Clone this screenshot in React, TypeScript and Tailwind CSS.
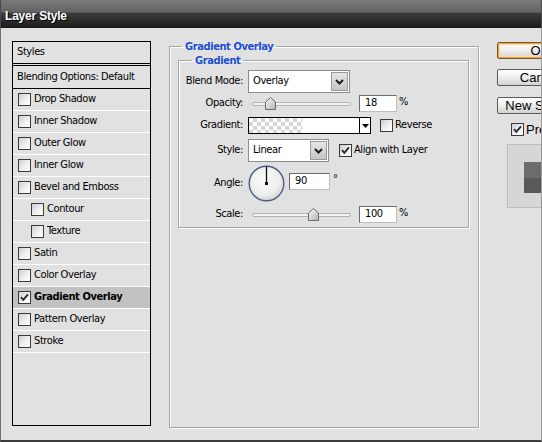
import React from "react";

const F = "font-['DejaVu_Sans_Condensed','DejaVu_Sans',sans-serif] tracking-[-0.4px]";

function Check({ checked = false }: { checked?: boolean }) {
  return (
    <span className="relative inline-flex items-center justify-center w-[13px] h-[13px] shrink-0 border border-[#3a3a3a] bg-[linear-gradient(135deg,#cfcfcf_0%,#f2f2f2_60%,#ffffff_100%)]">
      {checked && (
        <svg width="11" height="11" viewBox="0 0 11 11" className="absolute left-0 top-0">
          <polyline points="2,5.2 4.3,7.8 9,2.4" fill="none" stroke="#2a2a2a" strokeWidth="1.9" />
        </svg>
      )}
    </span>
  );
}

function Chevron() {
  return (
    <svg width="9" height="6" viewBox="0 0 9 6">
      <polyline points="1,1 4.5,4.5 8,1" fill="none" stroke="#1e1e1e" strokeWidth="2" />
    </svg>
  );
}

function Select({ value, w }: { value: string; w: string }) {
  return (
    <div className={`flex h-[23px] border border-[#8c8c8c] bg-white ${w}`}>
      <div className="flex-1 flex items-center pl-[4px] text-[11px] text-black">{value}</div>
      <div className="w-[17px] m-[1px] flex items-center justify-center border border-[#9a9a9a] bg-[linear-gradient(#e6e6e6,#c6c6c6)]">
        <Chevron />
      </div>
    </div>
  );
}

function Thumb() {
  return (
    <svg width="11" height="13" viewBox="0 0 11 13">
      <defs>
        <linearGradient id="tg" x1="0" x2="1" y1="0" y2="1">
          <stop offset="0" stopColor="#fafafa" />
          <stop offset="1" stopColor="#b5b5b5" />
        </linearGradient>
      </defs>
      <path d="M0.5 12.5 V5 L5.5 0.5 L10.5 5 V12.5 Z" fill="url(#tg)" stroke="#6a6a6a" />
    </svg>
  );
}

function Slider({ pos }: { pos: "a" | "b" }) {
  return (
    <div className="relative w-[106px] h-[17px] flex items-center">
      <div className="ml-[4px] w-[99px] h-[4px] rounded-[2px] border border-[#b2b2b2] bg-[#f5f5ee]" />
      {pos === "a" ? (
        <div className="absolute left-[17px] top-[2px]">
          <Thumb />
        </div>
      ) : (
        <div className="absolute left-[60px] top-[2px]">
          <Thumb />
        </div>
      )}
    </div>
  );
}

function Input({ value, w }: { value: string; w: string }) {
  return (
    <div className={`h-[17px] border border-[#6a6a6a] border-r-[#bdbdbd] border-b-[#bdbdbd] bg-white flex items-center pl-[5px] text-[11px] text-black ${w}`}>
      {value}
    </div>
  );
}

function Dial() {
  return (
    <svg width="37" height="37" viewBox="0 0 37 37">
      <defs>
        <radialGradient id="dg" cx="0.45" cy="0.4" r="0.6">
          <stop offset="0" stopColor="#fbfbfb" />
          <stop offset="0.7" stopColor="#eeeeee" />
          <stop offset="1" stopColor="#d6d6d6" />
        </radialGradient>
      </defs>
      <circle cx="18.5" cy="18.5" r="17.3" fill="url(#dg)" stroke="#4c5c88" strokeWidth="1.4" />
      <line x1="18.5" y1="18.5" x2="18.5" y2="1.5" stroke="#111" strokeWidth="1.3" />
      <rect x="17" y="17" width="3" height="3" fill="#111" />
    </svg>
  );
}

function Label({ children }: { children: React.ReactNode }) {
  return <div className="w-[64px] text-right text-[11px] text-black shrink-0">{children}</div>;
}

const items: { label: string; indent?: boolean; checked?: boolean }[] = [
  { label: "Drop Shadow" },
  { label: "Inner Shadow" },
  { label: "Outer Glow" },
  { label: "Inner Glow" },
  { label: "Bevel and Emboss" },
  { label: "Contour", indent: true },
  { label: "Texture", indent: true },
  { label: "Satin" },
  { label: "Color Overlay" },
  { label: "Gradient Overlay", checked: true },
  { label: "Pattern Overlay" },
  { label: "Stroke" },
];

function Button({ children, primary = false }: { children: React.ReactNode; primary?: boolean }) {
  return (
    <div
      className={`w-[86px] h-[17px] rounded-[2px] border flex items-center justify-center text-[13px] leading-none tracking-normal text-black font-['Liberation_Sans',Arial,sans-serif] bg-[linear-gradient(#ffffff_0%,#f0f0f0_45%,#d2d2d2_100%)] ${
        primary ? "border-[#6b5a3a] shadow-[inset_0_0_0_1px_#f2a43a,inset_0_0_0_2px_#ffd79a]" : "border-[#5a5a5a]"
      }`}
    >
      {children}
    </div>
  );
}

export default function App() {
  return (
    <div className={`w-[542px] h-[442px] overflow-hidden flex flex-col bg-[#e1e1e1] ${F}`}>
      {/* Title bar */}
      <div className="h-[28px] shrink-0 flex items-center pl-[4px] bg-[linear-gradient(#7a7a7a_0%,#626262_44%,#3c3c3c_46%,#1c1c1c_100%)] border-x border-[#4a4a4a]">
        <span className="text-white font-bold text-[12px] tracking-[-0.2px] font-['Liberation_Sans',Arial,sans-serif] [text-shadow:1px_1px_0_#000] pt-[3px]">
          Layer Style
        </span>
      </div>

      {/* Body */}
      <div className="flex-1 flex items-start border-l border-[#6f6f6f] border-r border-r-[#9a9a9a] border-b-2 border-b-[#3c3c3c] overflow-hidden">
        {/* Styles list */}
        <div className="ml-[11px] mt-[13px] w-[139px] h-[385px] shrink-0 border border-black flex flex-col text-[11px] text-black">
          <div className="h-[22px] shrink-0 flex items-center pl-[4px] border-b border-black">Styles</div>
          <div className="h-[2px] shrink-0 border-b border-black" />
          <div className="h-[23px] shrink-0 flex items-center pl-[4px] border-b border-black">Blending Options: Default</div>
          {items.map((it) => (
            <div
              key={it.label}
              className={`h-[22px] shrink-0 flex items-center gap-[3px] border-b border-white ${
                it.indent ? "pl-[18px]" : "pl-[5px]"
              } ${it.checked ? "bg-[#c2c2c2] font-bold" : ""}`}
            >
              <Check checked={!!it.checked} />
              <span>{it.label}</span>
            </div>
          ))}
        </div>

        {/* Gradient Overlay group */}
        <fieldset className="ml-[18px] mt-[12px] w-[310px] h-[388px] shrink-0 p-0 border border-[#a6a6a6] shadow-[1px_1px_0_#fff,inset_1px_1px_0_#fff]">
          <legend className="ml-[12px] px-[3px] text-[11px] leading-[13px] font-bold text-[#1a4ed0]">Gradient Overlay</legend>
          <fieldset className="ml-[8px] mt-[1px] w-[291px] h-[174px] p-0 border border-[#a6a6a6] shadow-[1px_1px_0_#fff,inset_1px_1px_0_#fff]">
            <legend className="ml-[13px] px-[3px] text-[11px] leading-[13px] font-bold text-[#1a4ed0]">Gradient</legend>
            <div className="flex flex-col pt-[3px]">
              <div className="flex items-center gap-[5px] h-[23px]">
                <Label>Blend Mode:</Label>
                <Select value="Overlay" w="w-[102px]" />
              </div>
              <div className="flex items-center mt-[2px] h-[17px]">
                <Label>Opacity:</Label>
                <div className="ml-[5px]">
                  <Slider pos="a" />
                </div>
                <div className="ml-[5px]">
                  <Input value="18" w="w-[38px]" />
                </div>
                <span className="ml-[2px] text-[11px] self-start -mt-[1px]">%</span>
              </div>
              <div className="flex items-center mt-[5px] h-[17px]">
                <Label>Gradient:</Label>
                <div className="ml-[5px] w-[123px] h-[17px] border border-black flex">
                  <div className="flex-1 [background:linear-gradient(90deg,transparent_0%,transparent_47%,#fff_50%,#fff_100%),repeating-conic-gradient(#d6d6d6_0_25%,#ffffff_0_50%)_0_0/8px_8px]" />
                  <div className="w-[11px] border-l border-black bg-white flex items-center justify-center">
                    <svg width="7" height="4" viewBox="0 0 7 4">
                      <path d="M0 0 H7 L3.5 4 Z" fill="#000" />
                    </svg>
                  </div>
                </div>
                <div className="ml-[9px] flex items-center gap-[2px] text-[11px]">
                  <Check />
                  <span>Reverse</span>
                </div>
              </div>
              <div className="flex items-center mt-[5px] h-[23px]">
                <Label>Style:</Label>
                <div className="ml-[5px]">
                  <Select value="Linear" w="w-[81px]" />
                </div>
                <div className="ml-[10px] flex items-center gap-[2px] text-[11px]">
                  <Check checked />
                  <span>Align with Layer</span>
                </div>
              </div>
              <div className="flex items-center mt-[3px] h-[37px]">
                <Label>Angle:</Label>
                <div className="ml-[5px] flex">
                  <Dial />
                </div>
                <div className="ml-[4px] mt-[-4px]">
                  <Input value="90" w="w-[41px]" />
                </div>
                <span className="ml-[3px] self-start mt-[6px] text-[11px]">°</span>
              </div>
              <div className="flex items-center mt-[4px] h-[17px]">
                <Label>Scale:</Label>
                <div className="ml-[5px]">
                  <Slider pos="b" />
                </div>
                <div className="ml-[5px]">
                  <Input value="100" w="w-[38px]" />
                </div>
                <span className="ml-[2px] text-[11px] self-start -mt-[1px]">%</span>
              </div>
            </div>
          </fieldset>
        </fieldset>

        {/* Right column */}
        <div className="ml-[18px] mt-[14px] shrink-0 flex flex-col">
          <Button primary>OK</Button>
          <div className="mt-[10px]">
            <Button>Cancel</Button>
          </div>
          <div className="mt-[11px]">
            <Button>New Style...</Button>
          </div>
          <div className="mt-[8px] ml-[14px] h-[15px] flex items-center gap-[2px] text-[13px] tracking-normal font-['Liberation_Sans',Arial,sans-serif]">
            <Check checked />
            <span>Preview</span>
          </div>
          <div className="mt-[7px] ml-[10px] w-[64px] h-[64px] border border-[#bcbcbc] bg-[#d6d6d6] pl-[16px] pt-[17px]">
            <div className="w-[32px] h-[31px] flex flex-col">
              <div className="flex-1 bg-[#6c6c6c]" />
              <div className="flex-1 bg-[#595959]" />
            </div>
          </div>
        </div>
      </div>
    </div>
  );
}
